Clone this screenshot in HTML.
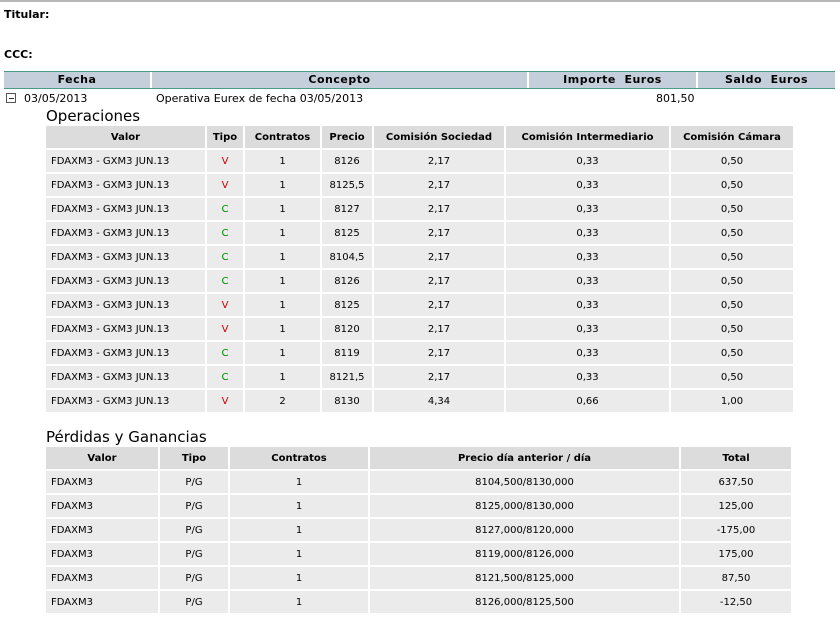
<!DOCTYPE html>
<html><head><meta charset="utf-8"><style>
body{margin:0;width:840px;height:620px;background:#fff;font-family:"DejaVu Sans","Liberation Sans",sans-serif;font-size:10px;color:#000;position:relative;overflow:hidden}
.a{position:absolute}
.topline{left:0;top:0;width:840px;height:2px;background:#b8b8b8}
.lbl{font-weight:bold;font-size:11px}
.hb{left:4px;top:71px;width:831px;height:16px;border-top:1px solid #4a9a8a;border-bottom:1px solid #4a9a8a}
.hc{position:absolute;top:0;height:16px;background:#c5cfdc;font-weight:bold;font-size:11px;text-align:center;line-height:16px;letter-spacing:.5px}
table{position:absolute;border-collapse:separate;border-spacing:2px;table-layout:fixed}
td,th{padding:0;height:22px;background:#ebebeb;text-align:center;font-size:10px;font-weight:normal;white-space:nowrap;overflow:hidden}
th{background:#dcdcdc;font-weight:bold}
td.l{text-align:left;padding-left:5px}
.v{color:#c00}.c{color:#080}
h2{position:absolute;margin:0;font-size:15px;font-weight:normal;left:46px}
.box{left:6px;top:93px;width:8px;height:8px;border:1px solid #555;}
.box:after{content:"";position:absolute;left:2px;top:4px;width:5px;height:1px;background:#333}
</style></head><body>
<div class="a topline"></div>
<div class="a lbl" style="left:4px;top:8px">Titular:</div>
<div class="a lbl" style="left:4px;top:48px">CCC:</div>
<div class="a hb">
<div class="hc" style="left:0;width:146px">Fecha</div>
<div class="hc" style="left:148px;width:375px">Concepto</div>
<div class="hc" style="left:525px;width:167px">Importe&nbsp; Euros</div>
<div class="hc" style="left:694px;width:137px">Saldo&nbsp; Euros</div>
</div>
<div class="a box"></div>
<div class="a" style="left:24px;top:92px;font-size:11px">03/05/2013</div>
<div class="a" style="left:156px;top:92px;font-size:11px">Operativa Eurex de fecha 03/05/2013</div>
<div class="a" style="left:656px;top:92px;font-size:11px">801,50</div>
<h2 style="top:107px">Operaciones</h2>
<table style="left:44px;top:124px;width:751px">
<tr><th style="width:159px">Valor</th><th style="width:36px">Tipo</th><th style="width:75px">Contratos</th><th style="width:50px">Precio</th><th style="width:130px">Comisión Sociedad</th><th style="width:163px">Comisión Intermediario</th><th style="width:122px">Comisión Cámara</th></tr>
<tr><td class="l">FDAXM3 - GXM3 JUN.13</td><td class="v">V</td><td>1</td><td>8126</td><td>2,17</td><td>0,33</td><td>0,50</td></tr>
<tr><td class="l">FDAXM3 - GXM3 JUN.13</td><td class="v">V</td><td>1</td><td>8125,5</td><td>2,17</td><td>0,33</td><td>0,50</td></tr>
<tr><td class="l">FDAXM3 - GXM3 JUN.13</td><td class="c">C</td><td>1</td><td>8127</td><td>2,17</td><td>0,33</td><td>0,50</td></tr>
<tr><td class="l">FDAXM3 - GXM3 JUN.13</td><td class="c">C</td><td>1</td><td>8125</td><td>2,17</td><td>0,33</td><td>0,50</td></tr>
<tr><td class="l">FDAXM3 - GXM3 JUN.13</td><td class="c">C</td><td>1</td><td>8104,5</td><td>2,17</td><td>0,33</td><td>0,50</td></tr>
<tr><td class="l">FDAXM3 - GXM3 JUN.13</td><td class="c">C</td><td>1</td><td>8126</td><td>2,17</td><td>0,33</td><td>0,50</td></tr>
<tr><td class="l">FDAXM3 - GXM3 JUN.13</td><td class="v">V</td><td>1</td><td>8125</td><td>2,17</td><td>0,33</td><td>0,50</td></tr>
<tr><td class="l">FDAXM3 - GXM3 JUN.13</td><td class="v">V</td><td>1</td><td>8120</td><td>2,17</td><td>0,33</td><td>0,50</td></tr>
<tr><td class="l">FDAXM3 - GXM3 JUN.13</td><td class="c">C</td><td>1</td><td>8119</td><td>2,17</td><td>0,33</td><td>0,50</td></tr>
<tr><td class="l">FDAXM3 - GXM3 JUN.13</td><td class="c">C</td><td>1</td><td>8121,5</td><td>2,17</td><td>0,33</td><td>0,50</td></tr>
<tr><td class="l">FDAXM3 - GXM3 JUN.13</td><td class="v">V</td><td>2</td><td>8130</td><td>4,34</td><td>0,66</td><td>1,00</td></tr>
</table>
<h2 style="top:428px">Pérdidas y Ganancias</h2>
<table style="left:44px;top:445px;width:749px">
<tr><th style="width:112px">Valor</th><th style="width:68px">Tipo</th><th style="width:138px">Contratos</th><th style="width:309px">Precio día anterior / día</th><th style="width:110px">Total</th></tr>
<tr><td class="l">FDAXM3</td><td>P/G</td><td>1</td><td>8104,500/8130,000</td><td>637,50</td></tr>
<tr><td class="l">FDAXM3</td><td>P/G</td><td>1</td><td>8125,000/8130,000</td><td>125,00</td></tr>
<tr><td class="l">FDAXM3</td><td>P/G</td><td>1</td><td>8127,000/8120,000</td><td>-175,00</td></tr>
<tr><td class="l">FDAXM3</td><td>P/G</td><td>1</td><td>8119,000/8126,000</td><td>175,00</td></tr>
<tr><td class="l">FDAXM3</td><td>P/G</td><td>1</td><td>8121,500/8125,000</td><td>87,50</td></tr>
<tr><td class="l">FDAXM3</td><td>P/G</td><td>1</td><td>8126,000/8125,500</td><td>-12,50</td></tr>
</table>
</body></html>
